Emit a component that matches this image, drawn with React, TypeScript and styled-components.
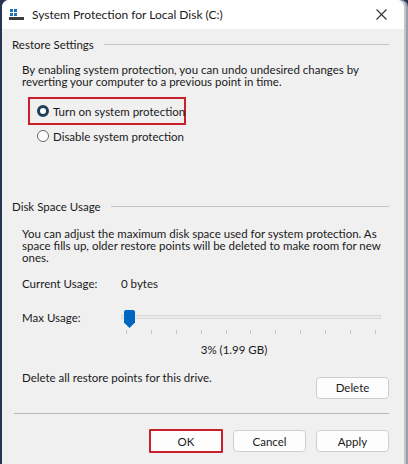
import React from "react";
import styled, { createGlobalStyle } from "styled-components";

const Global = createGlobalStyle`
  html, body { margin: 0; padding: 0; }
  body {
    width: 408px;
    height: 464px;
    overflow: hidden;
    background: #2a3352;
    font-family: Lato, "Noto Sans", sans-serif;
    font-size: 11.5px;
    color: #1a1a1a;
  }
`;

const Window = styled.div`
  margin-left: 2px;
  width: 402px;
  height: 464px;
  border-radius: 7px 7px 0 0;
  overflow: hidden;
  background: #f0f0f0;
  display: flex;
  flex-direction: column;
  box-shadow: 2px 0 0 #c4c6cc, 4px 0 0 #9aa0ab;
`;

const TitleBar = styled.div`
  height: 29px;
  flex: none;
  background: #ffffff;
  display: flex;
  align-items: center;
  padding: 0 0 0 7px;
  gap: 8px;
`;

const TitleText = styled.div`
  flex: 1;
  font-size: 12px;
  white-space: nowrap;
`;

const CloseBtn = styled.div`
  width: 12px;
  display: flex;
  justify-content: center;
  margin-right: 17px;
`;

const Body = styled.div`
  flex: 1;
  display: flex;
  flex-direction: column;
  padding: 7px 15px 0 10px;
`;

const GroupHeader = styled.div<{ $mt: number }>`
  display: flex;
  align-items: center;
  gap: 10px;
  height: 16px;
  white-space: nowrap;
  margin-top: ${(p) => p.$mt}px;
  &::after {
    content: "";
    flex: 1;
    height: 1px;
    background: #c4c4c4;
  }
`;

const Para = styled.p<{ $mt: number }>`
  margin: ${(p) => p.$mt}px 0 0 10px;
  line-height: 12px;
  white-space: nowrap;
`;

const RadioRow = styled.div<{ $boxed?: boolean }>`
  display: flex;
  align-items: center;
  gap: 4px;
  margin-left: 16px;
  padding-left: 7px;
  height: ${(p) => (p.$boxed ? 24 : 20)}px;
  width: ${(p) => (p.$boxed ? "147px" : "auto")};
  border: 2px solid ${(p) => (p.$boxed ? "#c8202a" : "transparent")};
  margin-top: ${(p) => (p.$boxed ? 9 : -1)}px;
  white-space: nowrap;
`;

const Radio = styled.span<{ $checked?: boolean }>`
  width: 12px;
  height: 12px;
  flex: none;
  border-radius: 50%;
  box-sizing: border-box;
  border: ${(p) => (p.$checked ? "3px solid #213f5c" : "1px solid #666666")};
  background: #ffffff;
`;

const InfoRow = styled.div<{ $mt: number }>`
  display: flex;
  align-items: flex-start;
  margin-left: 10px;
  margin-top: ${(p) => p.$mt}px;
  line-height: 20px;
  white-space: nowrap;
`;

const Label = styled.div`
  width: 99px;
`;

const SliderWrap = styled.div`
  position: relative;
  width: 260px;
  height: 24px;
  margin-top: 2px;
`;

const Track = styled.div`
  position: absolute;
  left: 0;
  right: 0;
  top: 5px;
  height: 4px;
  background: #ececec;
  border: 1px solid #d9d9d9;
  box-sizing: border-box;
`;

const Thumb = styled.svg`
  position: absolute;
  left: 3px;
  top: 0;
`;

const Ticks = styled.div`
  position: absolute;
  left: 5px;
  right: 5px;
  top: 20px;
  display: flex;
  justify-content: space-between;
`;

const Tick = styled.span`
  width: 1px;
  height: 4px;
  background: #c6c6c6;
`;

const Percent = styled.div`
  text-align: center;
  line-height: 14px;
  margin: 9px 0 0 120px;
  width: 204px;
  white-space: nowrap;
`;

const DeleteRow = styled.div`
  display: flex;
  justify-content: space-between;
  align-items: flex-start;
  margin: 14px 0 0 10px;
  line-height: 14px;
  white-space: nowrap;
`;

const Button = styled.div<{ $red?: boolean; $mt?: number }>`
  width: ${(p) => (p.$red ? 70 : 71)}px;
  height: 20px;
  border: ${(p) => (p.$red ? "2px solid #c8202a" : "1px solid #cfcfcf")};
  border-radius: ${(p) => (p.$red ? 1 : 4)}px;
  background: #fdfdfd;
  display: flex;
  align-items: center;
  justify-content: center;
  margin-top: ${(p) => p.$mt ?? 0}px;
  flex: none;
`;

const Separator = styled.div`
  height: 1px;
  background: #b9b9b9;
  margin: 14px 0 0 2px;
`;

const Footer = styled.div`
  display: flex;
  justify-content: flex-end;
  align-items: center;
  gap: 10px;
  margin-top: 15px;
`;

const DiskIcon = () => (
  <svg width="15" height="11" viewBox="0 0 15 11">
    <rect x="1" y="0" width="3" height="3" fill="#1e6fb8" />
    <rect x="5" y="0" width="3" height="3" fill="#1e6fb8" />
    <rect x="1" y="4" width="3" height="3" fill="#1e6fb8" />
    <rect x="5" y="4" width="3" height="3" fill="#1e6fb8" />
    <rect x="0" y="8" width="15" height="3" fill="#3d3d3d" />
  </svg>
);

export default function App() {
  return (
    <>
      <Global />
      <Window>
        <TitleBar>
          <DiskIcon />
          <TitleText>System Protection for Local Disk (C:)</TitleText>
          <CloseBtn>
            <svg width="11" height="11" viewBox="0 0 11 11">
              <path d="M0.5 0.5 L10.5 10.5 M10.5 0.5 L0.5 10.5" stroke="#333" strokeWidth="1.1" />
            </svg>
          </CloseBtn>
        </TitleBar>
        <Body>
          <GroupHeader $mt={0}>Restore Settings</GroupHeader>
          <Para $mt={12}>
            By enabling system protection, you can undo undesired changes by
            <br />
            reverting your computer to a previous point in time.
          </Para>
          <RadioRow $boxed>
            <Radio $checked />
            Turn on system protection
          </RadioRow>
          <RadioRow>
            <Radio />
            Disable system protection
          </RadioRow>
          <GroupHeader $mt={50}>Disk Space Usage</GroupHeader>
          <Para $mt={14}>
            You can adjust the maximum disk space used for system protection. As
            <br />
            space fills up, older restore points will be deleted to make room for new
            <br />
            ones.
          </Para>
          <InfoRow $mt={10}>
            <Label>Current Usage:</Label>
            <div>0 bytes</div>
          </InfoRow>
          <InfoRow $mt={14}>
            <Label>Max Usage:</Label>
            <SliderWrap>
              <Track />
              <Ticks>
                {Array.from({ length: 11 }).map((_, i) => (
                  <Tick key={i} />
                ))}
              </Ticks>
              <Thumb width="11" height="18" viewBox="0 0 11 18">
                <path d="M2 0 H9 Q11 0 11 2 V12.5 L5.5 18 L0 12.5 V2 Q0 0 2 0 Z" fill="#0067c0" />
              </Thumb>
            </SliderWrap>
          </InfoRow>
          <Percent>3% (1.99 GB)</Percent>
          <DeleteRow>
            <div>Delete all restore points for this drive.</div>
            <Button $mt={6}>Delete</Button>
          </DeleteRow>
          <Separator />
          <Footer>
            <Button $red>OK</Button>
            <Button>Cancel</Button>
            <Button>Apply</Button>
          </Footer>
        </Body>
      </Window>
    </>
  );
}
